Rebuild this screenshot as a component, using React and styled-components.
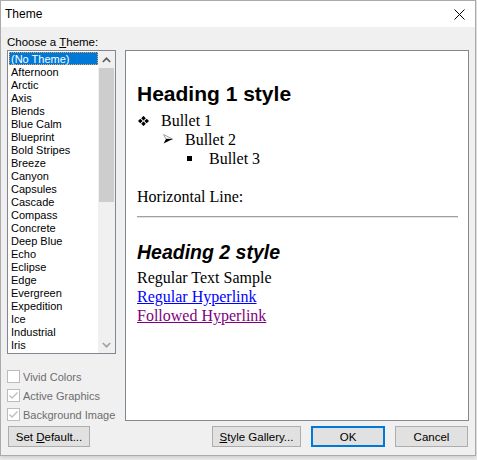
import React from 'react';
import styled, { createGlobalStyle } from 'styled-components';

const UI = `"Liberation Sans", Arial, sans-serif`;
const SERIF = `"Liberation Serif", "Times New Roman", serif`;

const GlobalStyle = createGlobalStyle`
  html, body {
    margin: 0;
    padding: 0;
    background: #ebebeb;
  }
  body {
    width: 477px;
    height: 460px;
    overflow: hidden;
  }
`;

const themes = [
  '(No Theme)', 'Afternoon', 'Arctic', 'Axis', 'Blends', 'Blue Calm', 'Blueprint',
  'Bold Stripes', 'Breeze', 'Canyon', 'Capsules', 'Cascade', 'Compass', 'Concrete',
  'Deep Blue', 'Echo', 'Eclipse', 'Edge', 'Evergreen', 'Expedition', 'Ice',
  'Industrial', 'Iris',
];

const Window = styled.div`
  width: 476px;
  height: 456px;
  box-sizing: border-box;
  border: 1px solid #ababab;
  background: #f0f0f0;
  font-family: ${UI};
  font-size: 11px;
  color: #000;
  display: flex;
  flex-direction: column;
  box-shadow: 0 1px 4px rgba(0, 0, 0, 0.16);
`;

const TitleBar = styled.div`
  height: 26px;
  flex: none;
  background: #fff;
  display: flex;
  align-items: center;
  justify-content: space-between;
  padding: 0 10px 0 4px;
  line-height: 26px;
  font-size: 12px;
`;

const Body = styled.div`
  flex: 1;
  padding: 6px 6px 8px 6px;
  display: flex;
  flex-direction: column;
`;

const Main = styled.div`
  display: flex;
  gap: 9px;
`;

const LeftCol = styled.div`
  width: 109px;
  display: flex;
  flex-direction: column;
`;

const FieldLabel = styled.div`
  height: 17px;
  line-height: 18px;
  font-size: 11.5px;
  white-space: nowrap;
`;

const Key = styled.span`
  text-decoration: underline;
  text-underline-offset: 1px;
`;

const ListBox = styled.div`
  height: 304px;
  box-sizing: border-box;
  border: 1px solid #828790;
  background: #fff;
  display: flex;
`;

const Items = styled.div`
  flex: 1;
  padding: 1px 0 0 1px;
  overflow: hidden;
`;

const Item = styled.div`
  height: 13px;
  line-height: 15px;
  padding-left: 2px;
  white-space: nowrap;
  box-sizing: border-box;
  background: ${p => (p.$selected ? '#0078d7' : 'transparent')};
  color: ${p => (p.$selected ? '#fff' : '#000')};
  outline: ${p => (p.$selected ? '1px dotted #f7a34a' : 'none')};
  outline-offset: -1px;
`;

const ScrollBar = styled.div`
  width: 17px;
  background: #f0f0f0;
  display: flex;
  flex-direction: column;
`;

const ScrollArrow = styled.div`
  height: 17px;
  flex: none;
  display: flex;
  align-items: center;
  justify-content: center;
`;

const Track = styled.div`
  flex: 1;
  display: flex;
  flex-direction: column;
`;

const Thumb = styled.div`
  height: 134px;
  margin: 0 1px;
  background: #cdcdcd;
`;

const Options = styled.div`
  margin-top: 16px;
  display: flex;
  flex-direction: column;
  gap: 6px;
`;

const CheckRow = styled.div`
  height: 13px;
  display: flex;
  align-items: center;
  gap: 3px;
  color: #6d6d6d;
  line-height: 14px;
  white-space: nowrap;
`;

const Box = styled.span`
  width: 13px;
  height: 13px;
  box-sizing: border-box;
  border: 1px solid #bcbcbc;
  background: #fff;
  display: flex;
  flex: none;
`;

const RightCol = styled.div`
  width: 344px;
  padding-top: 17px;
`;

const Preview = styled.div`
  height: 371px;
  box-sizing: border-box;
  border: 1px solid #828790;
  background: #fff;
  padding: 31px 10px 0 11px;
  font-family: ${SERIF};
  font-size: 16px;
  line-height: 19px;
`;

const Heading1 = styled.div`
  font-family: ${UI};
  font-weight: bold;
  font-size: 21px;
  line-height: 24px;
  margin-bottom: 5px;
`;

const Heading2 = styled.div`
  font-family: ${UI};
  font-weight: bold;
  font-style: italic;
  font-size: 19.5px;
  line-height: 23px;
  margin: 23px 0 4px;
`;

const Bullet = styled.div`
  display: flex;
  height: 19px;
  padding-left: ${p => p.$level * 24}px;
`;

const Mark = styled.span`
  width: 24px;
  flex: none;
  display: flex;
  align-items: flex-start;
  padding-left: ${p => p.$dx}px;
  padding-top: ${p => p.$dy}px;
  box-sizing: border-box;
`;

const Spaced = styled.div`
  margin-top: ${p => p.$top}px;
`;

const Rule = styled.div`
  margin-top: 10px;
  height: 1px;
  background: #a0a0a0;
  border-bottom: 1px solid #e3e3e3;
`;

const Link = styled.a`
  display: inline-block;
  color: ${p => (p.$visited ? '#800080' : '#0000ff')};
  text-decoration: underline;
`;

const Footer = styled.div`
  margin-top: 5px;
  height: 21px;
  display: flex;
  padding-left: 1px;
`;

const Button = styled.button`
  width: ${p => p.$w}px;
  height: 21px;
  margin-left: ${p => p.$ml || 0}px;
  padding: 0;
  box-sizing: border-box;
  font-family: ${UI};
  font-size: 11.5px;
  color: #000;
  background: #e1e1e1;
  border: ${p => (p.$primary ? '2px solid #0078d7' : '1px solid #adadad')};
  border-radius: 0;
  white-space: nowrap;
`;

const Chevron = ({ up, color }) => (
  <svg width="9" height="6" viewBox="0 0 9 6">
    <polyline
      points={up ? '0.8,5 4.5,1.3 8.2,5' : '0.8,1 4.5,4.7 8.2,1'}
      fill="none"
      stroke={color}
      strokeWidth="1.7"
    />
  </svg>
);

const Check = () => (
  <svg width="11" height="11" viewBox="0 0 11 11">
    <polyline points="1.5,5.5 4,8 9.5,2.5" fill="none" stroke="#bcbcbc" strokeWidth="1.3" />
  </svg>
);

const diamond = (cx, cy, r) => `M${cx} ${cy - r}L${cx + r} ${cy}L${cx} ${cy + r}L${cx - r} ${cy}Z`;

const FourDiamonds = () => (
  <svg width="11" height="10" viewBox="0 0 11 10">
    <path d={diamond(5.5, 2.2, 2.3) + diamond(2.3, 5, 2.3) + diamond(8.7, 5, 2.3) + diamond(5.5, 7.8, 2.3)} fill="#000" />
  </svg>
);

const Arrowhead = () => (
  <svg width="10" height="10" viewBox="0 0 10 10">
    <path d="M0.5 0.5L9.5 5L3 5Z" fill="#fff" stroke="#8a8a8a" strokeWidth="0.8" />
    <path d="M3 5L9.8 5L0.6 9.6Z" fill="#000" />
  </svg>
);

const Square = () => (
  <svg width="5" height="5" viewBox="0 0 5 5">
    <rect width="5" height="5" fill="#000" />
  </svg>
);

const Checkbox = ({ checked, children }) => (
  <CheckRow>
    <Box>{checked && <Check />}</Box>
    {children}
  </CheckRow>
);

export default function App() {
  return (
    <>
      <GlobalStyle />
      <Window>
        <TitleBar>
          <span>Theme</span>
          <svg width="11" height="11" viewBox="0 0 11 11">
            <path d="M0.5 0.5L10.5 10.5M10.5 0.5L0.5 10.5" stroke="#000" strokeWidth="1" />
          </svg>
        </TitleBar>
        <Body>
          <Main>
            <LeftCol>
              <FieldLabel>
                Choose a <Key>T</Key>heme:
              </FieldLabel>
              <ListBox>
                <Items>
                  {themes.map((t, i) => (
                    <Item key={t} $selected={i === 0}>
                      {t}
                    </Item>
                  ))}
                </Items>
                <ScrollBar>
                  <ScrollArrow>
                    <Chevron up color="#606060" />
                  </ScrollArrow>
                  <Track>
                    <Thumb />
                  </Track>
                  <ScrollArrow>
                    <Chevron color="#a3a3a3" />
                  </ScrollArrow>
                </ScrollBar>
              </ListBox>
              <Options>
                <Checkbox>Vivid Colors</Checkbox>
                <Checkbox checked>Active Graphics</Checkbox>
                <Checkbox checked>Background Image</Checkbox>
              </Options>
            </LeftCol>
            <RightCol>
              <Preview>
                <Heading1>Heading 1 style</Heading1>
                <Bullet $level={0}>
                  <Mark $dx={1} $dy={5}>
                    <FourDiamonds />
                  </Mark>
                  Bullet 1
                </Bullet>
                <Bullet $level={1}>
                  <Mark $dx={2} $dy={4}>
                    <Arrowhead />
                  </Mark>
                  Bullet 2
                </Bullet>
                <Bullet $level={2}>
                  <Mark $dx={2} $dy={7}>
                    <Square />
                  </Mark>
                  Bullet 3
                </Bullet>
                <Spaced $top={19}>Horizontal Line:</Spaced>
                <Rule />
                <Heading2>Heading 2 style</Heading2>
                <div>Regular Text Sample</div>
                <div>
                  <Link>Regular Hyperlink</Link>
                </div>
                <div>
                  <Link $visited>Followed Hyperlink</Link>
                </div>
              </Preview>
            </RightCol>
          </Main>
          <Footer>
            <Button $w={82}>
              Set <Key>D</Key>efault...
            </Button>
            <Button $w={89} $ml={122}>
              <Key>S</Key>tyle Gallery...
            </Button>
            <Button $w={74} $ml={10} $primary>
              OK
            </Button>
            <Button $w={73} $ml={10}>
              Cancel
            </Button>
          </Footer>
        </Body>
      </Window>
    </>
  );
}
